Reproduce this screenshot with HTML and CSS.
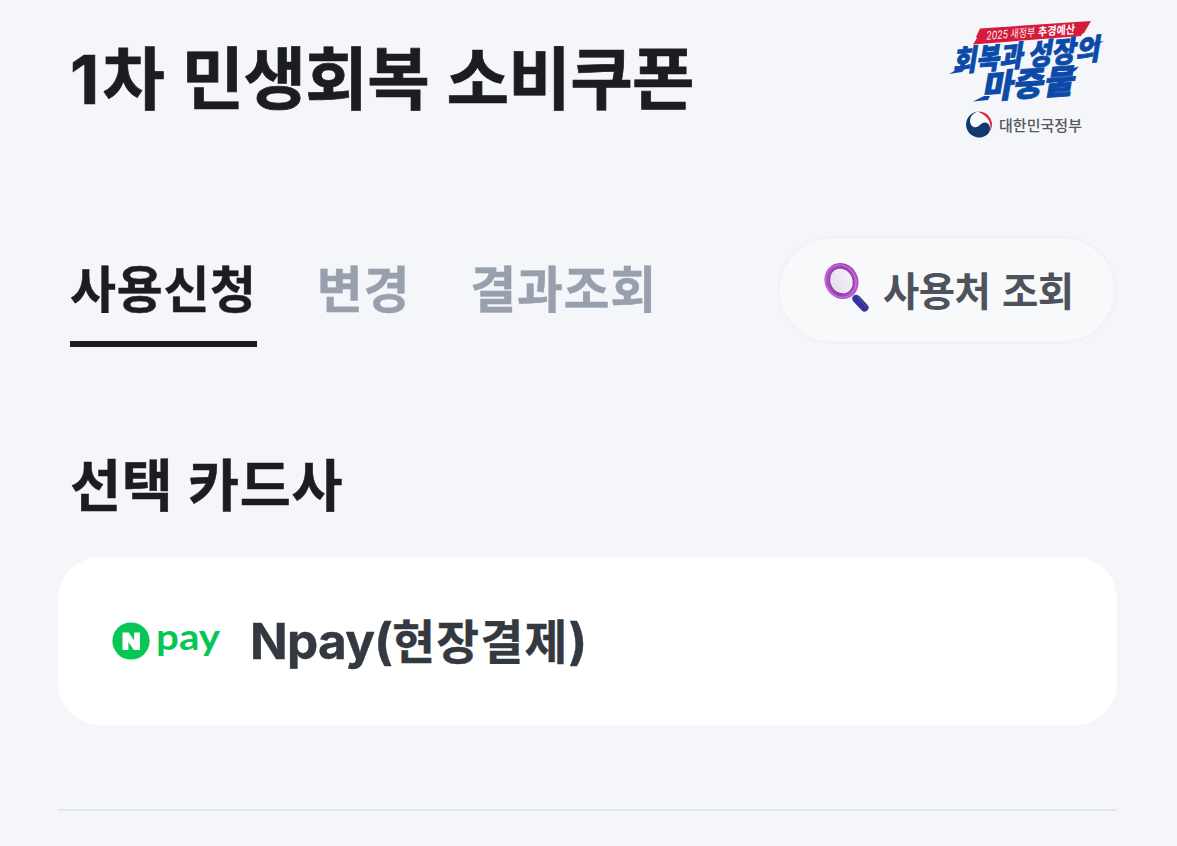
FILE: index.html
```html
<!DOCTYPE html>
<html lang="ko">
<head>
    <meta charset="UTF-8">
    <meta name="viewport" content="width=device-width, initial-scale=1.0">
    <title>1차 민생회복 소비쿠폰</title>
    <link rel="stylesheet" href="styles.css">
</head>
<body>
    <header class="page-header">
        <h1 class="page-title"><span class="title-num">1</span>차 민생회복 소비쿠폰</h1>
        <svg class="gov-logo" width="180" height="140" viewBox="0 0 180 140" role="img" aria-label="대한민국정부">
            <!-- Red ribbon -->
            <path fill="#d51c3d" d="M40 18.5 L151 11 L144 23 L142 24 L141 26 L33 34.5 L37 28 L36 27 Z"/>
            <g transform="translate(46 29.8) rotate(-4.2) skewX(-8)">
                <text class="ribbon-text" textLength="49" lengthAdjust="spacingAndGlyphs">2025 새정부</text>
                <text class="ribbon-text ribbon-bold" x="52" textLength="37" lengthAdjust="spacingAndGlyphs">추경예산</text>
            </g>
            <!-- Slogan -->
            <g transform="translate(13 62) rotate(-5) skewX(-14)">
                <text class="slogan" textLength="70" lengthAdjust="spacingAndGlyphs">회복과</text>
                <text class="slogan" x="75" textLength="72" lengthAdjust="spacingAndGlyphs">성장의</text>
            </g>
            <g transform="translate(42 89) rotate(-4) skewX(-14)">
                <text class="slogan slogan-big" textLength="92" lengthAdjust="spacingAndGlyphs">마중물</text>
            </g>
            <path fill="#0b4aa8" d="M9 64 L16 60 L24 60 L22 62 Z M33 91.5 L44 86 L50 86 L48 90 Z M154 32.5 L164 31 L157 35 L153 36 Z M131 58.5 L139 56.5 L135 61 L131 62 Z"/>
            <!-- Taegeuk mark -->
            <g transform="translate(39 114.5)">
                <circle r="13" fill="#f8fafc"/>
                <path fill="#d92a45" d="M-1.5 -12.9 A13 13 0 0 1 9.4 9 C11.4 6 12 2 10.8 -1.5 C9.6 -6.5 4 -10.8 -1.5 -12.9 Z"/>
                <path fill="#0d3a70" d="M-1.5 -12.9 A13 13 0 1 0 9 9.4 C11.6 6 11.6 1.6 9.2 -.8 C6.4 -3.2 3 -1.8 .6 .8 C-2 3.6 -5.8 3.2 -7.8 .4 C-11 -4.4 -7.5 -11 -1.5 -12.9 Z"/>
            </g>
            <text class="gov-name" x="59" y="120.5" textLength="83" lengthAdjust="spacingAndGlyphs">대한민국정부</text>
        </svg>
    </header>

    <nav class="tab-row">
        <div class="tabs">
            <a class="tab active">사용신청</a>
            <a class="tab">변경</a>
            <a class="tab">결과조회</a>
        </div>
        <button class="search-btn">
            <svg class="search-icon" width="50" height="52" viewBox="0 0 50 52">
                <defs>
                    <linearGradient id="ring" x1="0" y1="0" x2="1" y2="1">
                        <stop offset="0" stop-color="#b052c4"/>
                        <stop offset=".5" stop-color="#9c3fb5"/>
                        <stop offset="1" stop-color="#b65ad0"/>
                    </linearGradient>
                    <linearGradient id="lens" x1="0" y1="0" x2="1" y2="0">
                        <stop offset="0" stop-color="#e4dcec"/>
                        <stop offset="1" stop-color="#f5f3f8"/>
                    </linearGradient>
                </defs>
                <path d="M31 35 L34 38" stroke="#a58bd0" stroke-width="5"/>
                <path d="M34.5 38 L42.5 46.5" stroke="#34349c" stroke-width="8" stroke-linecap="round"/>
                <path d="M36 36.5 L44 45" stroke="#4649ac" stroke-width="1.5" stroke-linecap="round"/>
                <g transform="rotate(-28 19.5 20)">
                    <ellipse cx="19.5" cy="20" rx="14" ry="15.8" fill="url(#lens)" stroke="url(#ring)" stroke-width="5.2"/>
                    <ellipse cx="18.8" cy="19.8" rx="14.8" ry="16.6" fill="none" stroke="#c272d8" stroke-width="1.3"/>
                    <ellipse cx="19.5" cy="20" rx="11.5" ry="13.2" fill="none" stroke="#8a3ba5" stroke-width="1"/>
                </g>
            </svg>
            <span class="search-label">사용처 조회</span>
        </button>
    </nav>

    <main>
        <h2 class="section-title">선택 카드사</h2>
        <div class="card">
            <svg class="npay-logo" width="110" height="60" viewBox="0 -10 110 60">
                <circle cx="19" cy="20" r="18.6" fill="#06c755"/>
                <path fill="#fff" d="M10.5 11.5 H16.8 L22.1 19.5 V11.5 H28 V29 H21.9 L16.4 21 V29 H10.5 Z"/>
                <text class="npay-word" x="44" y="29" textLength="64" lengthAdjust="spacingAndGlyphs">pay</text>
            </svg>
            <span class="card-name">Npay(<span class="card-name-ko">현장결제</span>)</span>
        </div>
        <hr class="divider">
    </main>
</body>
</html>
```

FILE: styles.css
```css
* {
    box-sizing: border-box;
}
body {
    margin: 0;
    padding: 0 60px 0 58px;
    min-height: 846px;
    background-color: #f4f6fa;
    font-family: 'Inter', 'Noto Sans CJK KR', sans-serif;
    font-weight: 700;
    color: #1b1d22;
    overflow: hidden;
}
h1, h2 {
    margin: 0;
}
.page-header {
    display: flex;
    justify-content: space-between;
    height: 236px;
    padding: 10px 0 0 12px;
}
.page-title {
    height: 140px;
    line-height: 139px;
    font-size: 68px;
    letter-spacing: -0.7px;
    word-spacing: 2px;
    white-space: nowrap;
    -webkit-text-stroke: 0.7px #1b1d22;
}
.title-num {
    letter-spacing: 3px;
}
.gov-logo {
    flex: none;
    margin-right: -3px;
}
/* Government logo lettering */
.ribbon-text {
    font-size: 11.5px;
    font-weight: 400;
    fill: #fde7ea;
}
.ribbon-bold {
    font-weight: 700;
    fill: #fff;
}
.slogan {
    font-size: 29px;
    font-weight: 900;
    fill: #0b4aa8;
    stroke: #0b4aa8;
    stroke-width: 0.8px;
}
.slogan-big {
    font-size: 33px;
}
.gov-name {
    font-size: 15px;
    font-weight: 500;
    fill: #55585d;
}
/* Tabs */
.tab-row {
    display: flex;
    justify-content: space-between;
    height: 216px;
    padding-left: 12px;
}
.tabs {
    display: flex;
    gap: 60px;
    height: 111px;
}
.tab {
    height: 111px;
    line-height: 108px;
    font-size: 50px;
    letter-spacing: 0.7px;
    color: #98a0ae;
    white-space: nowrap;
    -webkit-text-stroke: 0.4px currentColor;
}
.tab.active {
    color: #1b1d22;
    border-bottom: 6px solid #1b1d22;
}
.search-btn {
    display: flex;
    align-items: center;
    width: 340px;
    height: 108px;
    padding: 0 0 0 42px;
    border: 3px solid #f1f3f6;
    border-radius: 54px;
    background-color: #f7f9fb;
    font: inherit;
    color: #4d525b;
}
.search-icon {
    flex: none;
    margin: -6px 11px 0 0;
}
.search-label {
    margin-top: -4px;
    font-size: 39.5px;
    letter-spacing: -0.6px;
    word-spacing: 3px;
    white-space: nowrap;
}
/* Selected card company */
.section-title {
    height: 105px;
    padding-left: 12px;
    line-height: 67px;
    font-size: 55.5px;
    letter-spacing: 0.6px;
    word-spacing: 1px;
    -webkit-text-stroke: 0.5px #1b1d22;
}
.card {
    display: flex;
    align-items: center;
    height: 168px;
    padding-left: 54px;
    border-radius: 42px;
    background-color: #fff;
    color: #343840;
}
.npay-logo {
    flex: none;
    margin-right: 28px;
}
.npay-word {
    font-family: 'Lato', sans-serif;
    font-size: 36px;
    font-weight: 700;
    fill: #06c755;
}
.card-name {
    margin-top: -6px;
    font-size: 49.5px;
    letter-spacing: -0.7px;
    white-space: nowrap;
    -webkit-text-stroke: 0.4px #343840;
}
.card-name-ko {
    font-size: 46.5px;
    letter-spacing: 1.3px;
}
.divider {
    height: 2px;
    margin: 84px 0 0;
    border: 0;
    background-color: #e3e6eb;
}
```
